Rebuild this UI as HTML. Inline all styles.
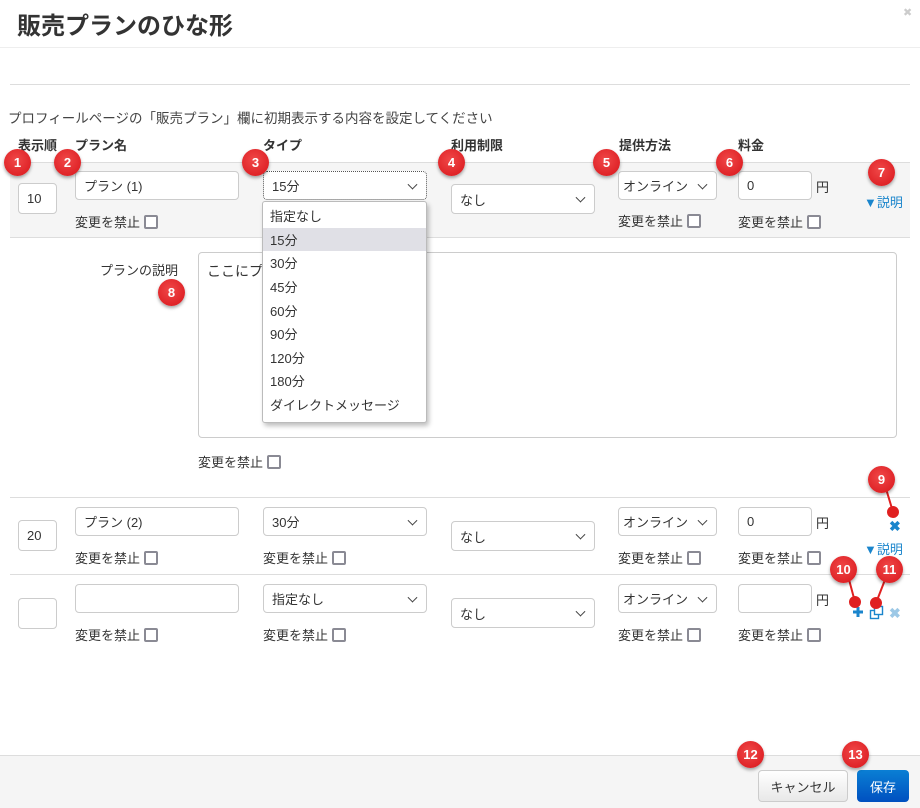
<!DOCTYPE html>
<html><head><meta charset="utf-8"><style>
*{box-sizing:border-box;margin:0;padding:0}
body{width:920px;height:808px;position:relative;overflow:hidden;background:#fff;font-family:"Liberation Sans","Noto Sans CJK JP",sans-serif;color:#333;font-size:13px}
.a{position:absolute}
.in{position:absolute;border:1px solid #ccc;border-radius:4px;background:#fff;font-size:13px;padding-left:8px;display:flex;align-items:center;color:#333}
.sel::after{content:"";position:absolute;right:10px;top:50%;width:6px;height:6px;border-right:1.5px solid #444;border-bottom:1.5px solid #444;transform:translateY(-70%) rotate(45deg)}
.lb{position:absolute;font-size:13px;color:#333;display:flex;align-items:center}
.cb{display:inline-block;width:14px;height:14px;border:2px solid #8a8a94;border-radius:2px;margin-left:4px;background:#fff}
.h{position:absolute;font-weight:bold;font-size:13px;top:135px}
.bd{position:absolute;width:27px;height:27px;border-radius:50%;background:radial-gradient(circle at 45% 40%,#f04848,#d8141a);color:#fff;font-size:13px;font-weight:bold;display:flex;align-items:center;justify-content:center;box-shadow:0 2px 3px rgba(0,0,0,.35);z-index:5}
.ln{position:absolute;background:#ddd;height:1px}
.dd div{height:23.6px;padding-left:7px;display:flex;align-items:center;font-size:13px}
.blue{color:#1a85cc}
</style></head><body>
<div class="a" style="left:17px;top:6px;font-size:24px;font-weight:bold;color:#333">販売プランのひな形</div>
<div class="a" style="left:903px;top:6px;color:#ccc;font-size:11px">✖</div>
<div class="ln" style="left:0;top:47px;width:920px;background:#eee"></div>
<div class="ln" style="left:10px;top:84px;width:900px"></div>
<div class="a" style="left:8px;top:107px;font-size:13.5px;color:#444">プロフィールページの「販売プラン」欄に初期表示する内容を設定してください</div>
<div class="h" style="left:18px">表示順</div><div class="h" style="left:75px">プラン名</div><div class="h" style="left:263px">タイプ</div><div class="h" style="left:451px">利用制限</div><div class="h" style="left:619px">提供方法</div><div class="h" style="left:738px">料金</div>

<div class="a" style="left:10px;top:162px;width:900px;height:76px;background:#f5f5f5;border-top:1px solid #ddd;border-bottom:1px solid #ddd"></div>
<div class="in" style="left:18px;top:183px;width:39px;height:31px">10</div>
<div class="in" style="left:75px;top:171px;width:164px;height:29px">プラン (1)</div>
<div class="in sel" style="left:263px;top:171px;width:164px;height:29px;border:1px dotted #555">15分</div>
<div class="in sel" style="left:451px;top:184px;width:144px;height:30px">なし</div>
<div class="in sel" style="left:618px;top:171px;width:99px;height:29px;padding-left:4px">オンライン</div>
<div class="in" style="left:738px;top:171px;width:74px;height:29px">0</div>
<div class="lb" style="left:816px;top:177px">円</div>
<div class="lb" style="left:75px;top:212px">変更を禁止<span class="cb"></span></div>
<div class="lb" style="left:618px;top:211px">変更を禁止<span class="cb"></span></div>
<div class="lb" style="left:738px;top:212px">変更を禁止<span class="cb"></span></div>
<div class="lb blue" style="left:864px;top:192px">▼説明</div>
<div class="lb" style="left:100px;top:260px">プランの説明</div>
<div class="in" style="left:198px;top:252px;width:699px;height:186px;align-items:flex-start;padding-top:8px;font-size:14px">ここにプラ</div>
<div class="lb" style="left:198px;top:452px">変更を禁止<span class="cb"></span></div>
<div class="a dd" style="left:262px;top:201px;width:165px;height:222px;background:#fff;border:1px solid #bbb;border-radius:3px;box-shadow:2px 3px 5px rgba(0,0,0,.25);padding-top:2px;z-index:3">
<div>指定なし</div><div style="background:#e0e0e6">15分</div><div>30分</div><div>45分</div><div>60分</div><div>90分</div><div>120分</div><div>180分</div><div>ダイレクトメッセージ</div></div>

<div class="ln" style="left:10px;top:497px;width:900px"></div>
<div class="in" style="left:18px;top:520px;width:39px;height:31px">20</div>
<div class="in" style="left:75px;top:507px;width:164px;height:29px">プラン (2)</div>
<div class="in sel" style="left:263px;top:507px;width:164px;height:29px">30分</div>
<div class="in sel" style="left:451px;top:521px;width:144px;height:30px">なし</div>
<div class="in sel" style="left:618px;top:507px;width:99px;height:29px;padding-left:4px">オンライン</div>
<div class="in" style="left:738px;top:507px;width:74px;height:29px">0</div>
<div class="lb" style="left:816px;top:513px">円</div>
<div class="lb" style="left:75px;top:548px">変更を禁止<span class="cb"></span></div>
<div class="lb" style="left:263px;top:548px">変更を禁止<span class="cb"></span></div>
<div class="lb" style="left:618px;top:548px">変更を禁止<span class="cb"></span></div>
<div class="lb" style="left:738px;top:548px">変更を禁止<span class="cb"></span></div>
<div class="lb blue" style="left:889px;top:518px;font-weight:bold;font-size:14px">✖</div>
<div class="lb blue" style="left:864px;top:539px">▼説明</div>

<div class="ln" style="left:10px;top:574px;width:900px"></div>
<div class="in" style="left:18px;top:598px;width:39px;height:31px"></div>
<div class="in" style="left:75px;top:584px;width:164px;height:29px"></div>
<div class="in sel" style="left:263px;top:584px;width:164px;height:29px">指定なし</div>
<div class="in sel" style="left:451px;top:598px;width:144px;height:30px">なし</div>
<div class="in sel" style="left:618px;top:584px;width:99px;height:29px;padding-left:4px">オンライン</div>
<div class="in" style="left:738px;top:584px;width:74px;height:29px"></div>
<div class="lb" style="left:816px;top:590px">円</div>
<div class="lb" style="left:75px;top:625px">変更を禁止<span class="cb"></span></div>
<div class="lb" style="left:263px;top:625px">変更を禁止<span class="cb"></span></div>
<div class="lb" style="left:618px;top:625px">変更を禁止<span class="cb"></span></div>
<div class="lb" style="left:738px;top:625px">変更を禁止<span class="cb"></span></div>
<svg class="a" style="left:852px;top:606px" width="12" height="12" viewBox="0 0 12 12"><path d="M6 1V11M1 6H11" stroke="#1a85cc" stroke-width="3"/></svg>
<svg class="a" style="left:869px;top:605px" width="16" height="16" viewBox="0 0 16 16"><rect x="1.5" y="5.5" width="8" height="8" fill="none" stroke="#1a85cc" stroke-width="1.4"/><rect x="5.5" y="1.5" width="8" height="8" fill="#fff" stroke="#1a85cc" stroke-width="1.4"/></svg>
<div class="lb" style="left:889px;top:605px;color:#9cc8e6;font-weight:bold;font-size:14px">✖</div>

<div class="a" style="left:0;top:755px;width:920px;height:53px;background:#f5f5f5;border-top:1px solid #ddd"></div>
<div class="a" style="left:758px;top:770px;width:90px;height:32px;border:1px solid #ccc;border-radius:4px;background:linear-gradient(#fff,#e8e8e8);display:flex;align-items:center;justify-content:center;font-size:13px">キャンセル</div>
<div class="a" style="left:857px;top:770px;width:52px;height:32px;border-radius:4px;background:linear-gradient(#0a7fd4,#0050c0);color:#fff;display:flex;align-items:center;justify-content:center;font-size:13px">保存</div>

<svg class="a" style="left:0;top:0;z-index:4" width="920" height="808"><g stroke="#e02020" stroke-width="2" fill="#e02020"><line x1="884" y1="482" x2="893" y2="512"/><circle cx="893" cy="512" r="5"/><line x1="847" y1="572" x2="855" y2="602"/><circle cx="855" cy="602" r="5"/><line x1="888" y1="572" x2="876" y2="603"/><circle cx="876" cy="603" r="5"/></g></svg>
<div class="bd" style="left:4px;top:149px">1</div>
<div class="bd" style="left:54px;top:149px">2</div>
<div class="bd" style="left:242px;top:149px">3</div>
<div class="bd" style="left:438px;top:149px">4</div>
<div class="bd" style="left:593px;top:149px">5</div>
<div class="bd" style="left:716px;top:149px">6</div>
<div class="bd" style="left:868px;top:159px">7</div>
<div class="bd" style="left:158px;top:279px">8</div>
<div class="bd" style="left:868px;top:466px">9</div>
<div class="bd" style="left:830px;top:556px">10</div>
<div class="bd" style="left:876px;top:556px">11</div>
<div class="bd" style="left:737px;top:741px">12</div>
<div class="bd" style="left:842px;top:741px">13</div>
</body></html>
